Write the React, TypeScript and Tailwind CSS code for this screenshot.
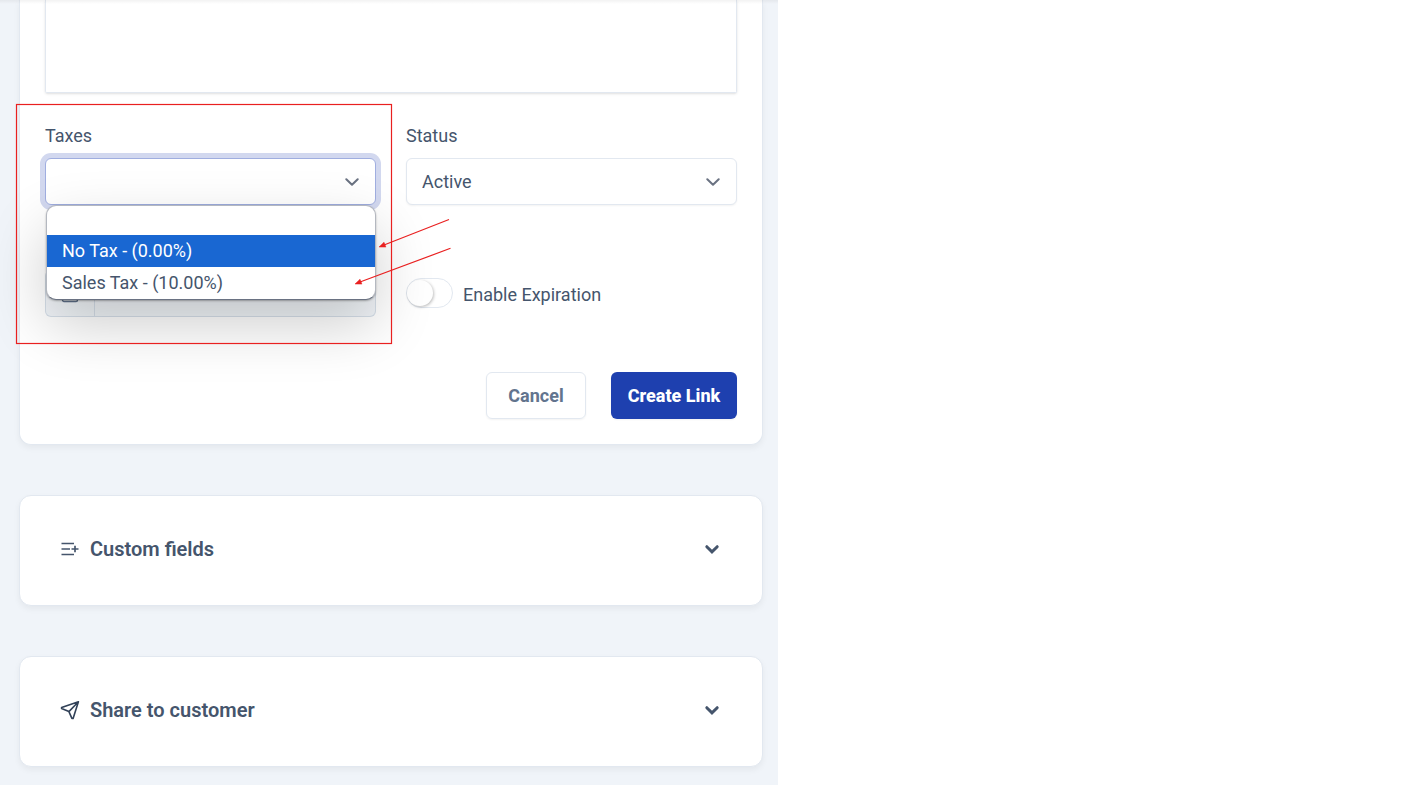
import { useState } from "react";
import type { ReactNode } from "react";

interface TaxOption {
  value: string;
  label: string;
}

const TAXES: TaxOption[] = [
  { value: "", label: "" },
  { value: "none", label: "No Tax - (0.00%)" },
  { value: "sales", label: "Sales Tax - (10.00%)" },
];

const SELECT_CLASS =
  "block h-[47px] w-full appearance-none rounded-md border bg-white pl-[15px] pr-10 text-lg outline-none";

export default function App() {
  return (
    <div className="relative min-h-screen bg-white font-['Roboto',sans-serif] text-lg text-slate-600">
      <main className="min-h-screen w-full max-w-[778px] overflow-hidden bg-[#f0f4f9] pr-[15px] pl-[19px]">
        <LinkForm />
        <Panel title="Custom fields" icon={<FieldsIcon />} />
        <Panel title="Share to customer" icon={<PlaneIcon />} />
      </main>
      <div className="absolute top-0 left-0 h-1 w-full max-w-[778px] bg-gradient-to-b from-black/5 to-transparent" />
      <Callout />
    </div>
  );
}

function LinkForm() {
  const [tax, setTax] = useState("");
  const [active, setActive] = useState("none");

  return (
    <form className="rounded-b-xl border border-t-0 border-slate-200 bg-white px-[25px] pb-[25px] shadow-[0_3px_6px_rgba(0,0,0,0.05)]">
      <textarea
        aria-label="Description"
        className="block h-[93px] w-full resize-none rounded-b-xs border border-t-0 border-slate-200 p-3 shadow-sm outline-none"
      />

      <div className="mt-[31px] grid grid-cols-2 gap-x-[30px] gap-y-[31px]">
        <div className="relative">
          <label htmlFor="taxes" className="mb-2.5 block leading-6">
            Taxes
          </label>
          <div className="relative">
            <select
              id="taxes"
              value={tax}
              onChange={(e) => setTax(e.target.value)}
              className={`${SELECT_CLASS} border-[#a0aee0] ring-5 ring-[#d2d8ef]`}
            >
              {TAXES.map((t) => (
                <option key={t.value} value={t.value}>
                  {t.label}
                </option>
              ))}
            </select>
            <Caret />
          </div>
          <ul
            role="listbox"
            aria-label="Taxes"
            className="absolute top-full right-0 left-px z-10 overflow-hidden rounded-[10px] border border-gray-500/50 border-b-gray-500 bg-white shadow-[0_1px_2px_rgba(0,0,0,0.3),0_24px_60px_rgba(0,0,0,0.2)]"
          >
            {TAXES.map((t) => (
              <li
                key={t.value}
                role="option"
                aria-selected={t.value === active}
                onMouseEnter={() => setActive(t.value)}
                onClick={() => setTax(t.value)}
                className={`px-[15px] leading-8 ${t.label ? "h-8" : "h-[29px]"} ${
                  t.value === active ? "bg-[#1967d2] text-white" : ""
                }`}
              >
                {t.label}
              </li>
            ))}
          </ul>
        </div>

        <div>
          <label htmlFor="status" className="mb-2.5 block leading-6">
            Status
          </label>
          <div className="relative">
            <select id="status" className={`${SELECT_CLASS} border-slate-200 shadow-xs`}>
              <option>Active</option>
              <option>Inactive</option>
            </select>
            <Caret />
          </div>
        </div>

        <div className="pt-[34px]">
          <div className="flex h-[47px] overflow-hidden rounded-md border border-slate-300/70 bg-slate-100">
            <span className="flex w-[49px] items-center justify-center border-r border-slate-300/70 text-slate-500">
              <CalendarIcon />
            </span>
            <input aria-label="Expiration date" disabled className="min-w-0 flex-1 px-3" />
          </div>
        </div>

        <div className="flex items-center pt-8">
          <label className="flex items-center gap-2.5">
            <input type="checkbox" className="peer sr-only" />
            <span className="flex h-[30px] w-[47px] items-center rounded-full border border-slate-200 bg-white peer-checked:justify-end">
              <span className="h-[26px] w-[26px] rounded-full bg-white shadow-[1px_1px_3px_rgba(0,0,0,0.25)]" />
            </span>
            <span className="pt-1">Enable Expiration</span>
          </label>
        </div>
      </div>

      <div className="mt-[55px] flex justify-end gap-[25px]">
        <button
          type="button"
          className="h-[47px] w-[100px] rounded-md border border-slate-200 font-bold text-slate-500 shadow-xs"
        >
          Cancel
        </button>
        <button type="submit" className="h-[47px] w-[126px] rounded-md bg-[#1e40af] font-extrabold text-white shadow-xs">
          Create Link
        </button>
      </div>
    </form>
  );
}

function Panel({ title, icon }: { title: string; icon: ReactNode }) {
  return (
    <section className="mt-[50px] flex h-[111px] rounded-xl border border-slate-200 bg-white px-10 pb-1 shadow-[0_3px_6px_rgba(0,0,0,0.05)]">
      <button type="button" className="flex w-full items-center text-left">
        {icon}
        <span className="ml-2.5 flex-1 text-xl font-semibold">{title}</span>
        <svg
          viewBox="0 0 16 16"
          className="mr-0.5 h-4 w-4"
          fill="none"
          stroke="currentColor"
          strokeWidth="3"
          strokeLinecap="round"
        >
          <path d="M2.8 5.7 8 10.9l5.2-5.2" />
        </svg>
      </button>
    </section>
  );
}

function Caret() {
  return (
    <svg
      viewBox="0 0 14 8"
      className="pointer-events-none absolute top-5 right-[17px] h-2 w-3.5 text-gray-500"
      fill="none"
      stroke="currentColor"
      strokeWidth="2"
      strokeLinecap="round"
      strokeLinejoin="round"
    >
      <path d="M1.3 1.2 7 6.8l5.7-5.6" />
    </svg>
  );
}

function FieldsIcon() {
  return (
    <svg viewBox="0 0 20 20" className="h-5 w-5" fill="none" stroke="currentColor" strokeWidth="1.7">
      <path d="M1.5 4.5h12.5M1.5 10h8.5M1.5 15.5h12.5M11.5 10h7M15 6.8v6.4" />
    </svg>
  );
}

function PlaneIcon() {
  return (
    <svg
      viewBox="0 0 20 20"
      className="h-5 w-5 text-slate-700"
      fill="none"
      stroke="currentColor"
      strokeWidth="1.6"
      strokeLinejoin="round"
    >
      <path d="M18.4 1.8 1.6 7.4v1.2l7.3 3 3 6.8h1.2zM18.4 1.8l-9.5 9.8" />
    </svg>
  );
}

function CalendarIcon() {
  return (
    <svg viewBox="0 0 18 18" className="h-[18px] w-[18px]" fill="none" stroke="currentColor" strokeWidth="1.4">
      <rect x="1.5" y="2.5" width="15" height="14" rx="1.5" />
      <path d="M1.5 7h15M5.5.5v4M12.5.5v4" />
    </svg>
  );
}

/* Red markup pointing at the tax options, drawn over the page. */
function Callout() {
  return (
    <svg
      viewBox="0 0 460 350"
      className="pointer-events-none absolute top-0 left-0 z-20 h-[350px] w-[460px]"
      fill="none"
      stroke="#e92020"
      strokeWidth="1.2"
    >
      <rect x="16.5" y="104.5" width="375" height="239" />
      <path d="M449 219.5 384 245M450.500 248.300 360 282" />
      <path d="m379 247 5-4.800 1.900 4.900zM355 284l5-4.800 1.900 4.900z" fill="#e92020" strokeWidth=".5" />
    </svg>
  );
}
